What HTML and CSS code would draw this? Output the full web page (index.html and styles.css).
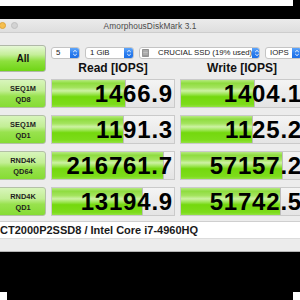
FILE: index.html
```html
<!DOCTYPE html>
<html>
<head>
<meta charset="utf-8">
<link rel="stylesheet" href="styles.css">
</head>
<body>
<div class="screen">
  <div class="strip-top"><div class="wht"></div><div class="blk"></div></div>
  <div class="band-top"></div>
  <div class="window">
    <div class="titlebar">
      <div class="lights"><span class="light yellow"></span><span class="light gray"></span></div>
      <div class="title">AmorphousDiskMark 3.1</div>
      <div></div>
    </div>
    <div class="content">
      <div class="grid">
        <div class="btn-all">All</div>
        <div class="topright">
          <div class="selects">
            <div class="sel w5"><span class="txt">5</span><span class="step"><svg width="10" height="10" viewBox="0 0 10 10"><path d="M3.2 4 L5 2.4 L6.8 4 M3.2 6 L5 7.6 L6.8 6" fill="none" stroke="#fff" stroke-width="0.9"/></svg></span></div>
            <div class="sel wgib"><span class="txt">1 GiB</span><span class="step"><svg width="10" height="10" viewBox="0 0 10 10"><path d="M3.2 4 L5 2.4 L6.8 4 M3.2 6 L5 7.6 L6.8 6" fill="none" stroke="#fff" stroke-width="0.9"/></svg></span></div>
            <div class="sel wdrive"><span class="disk"><svg width="7" height="8" viewBox="0 0 7 8"><rect x="0.3" y="0.3" width="6.4" height="7.4" rx="0.8" fill="#9a9a9a" stroke="#6e6e6e" stroke-width="0.6"/><path d="M1.2 2 H5.8 M1.2 3.5 H5.8 M1.2 5 H5.8" stroke="#d8d8d8" stroke-width="0.6"/></svg></span><span class="txt">CRUCIAL SSD (19% used)</span><span class="step"><svg width="10" height="10" viewBox="0 0 10 10"><path d="M3.2 4 L5 2.4 L6.8 4 M3.2 6 L5 7.6 L6.8 6" fill="none" stroke="#fff" stroke-width="0.9"/></svg></span></div>
            <div class="sel wiops"><span class="txt">IOPS</span><span class="step"><svg width="10" height="10" viewBox="0 0 10 10"><path d="M3.2 4 L5 2.4 L6.8 4 M3.2 6 L5 7.6 L6.8 6" fill="none" stroke="#fff" stroke-width="0.9"/></svg></span></div>
          </div>
          <div class="heads">
            <div class="head">Read [IOPS]</div>
            <div class="head">Write [IOPS]</div>
          </div>
        </div>

        <div class="label">SEQ1M<br>QD8</div>
        <div class="cell"><div class="bar" style="width:74px"></div><span class="val">1466.9</span></div>
        <div class="cell"><div class="bar" style="width:74px"></div><span class="val">1404.1</span></div>

        <div class="label">SEQ1M<br>QD1</div>
        <div class="cell"><div class="bar" style="width:72px"></div><span class="val">1191.3</span></div>
        <div class="cell"><div class="bar" style="width:72px"></div><span class="val">1125.2</span></div>

        <div class="label">RND4K<br>QD64</div>
        <div class="cell"><div class="bar" style="width:112px"></div><span class="val">216761.7</span></div>
        <div class="cell"><div class="bar" style="width:102px"></div><span class="val">57157.2</span></div>

        <div class="label">RND4K<br>QD1</div>
        <div class="cell"><div class="bar" style="width:91px"></div><span class="val">13194.9</span></div>
        <div class="cell"><div class="bar" style="width:100px"></div><span class="val">51742.5</span></div>
      </div>
      <div class="footer">CT2000P2SSD8 / Intel Core i7-4960HQ</div>
    </div>
  </div>
  <div class="band-bottom"></div>
  <div class="strip-bottom"><div class="wht"></div><div class="blk"></div><div class="wht"></div></div>
</div>
</body>
</html>
```
FILE: styles.css
```css
html, body {
  margin: 0;
  padding: 0;
  background: #fff;
  overflow: hidden;
}
.screen {
  width: 300px;
  height: 300px;
  overflow: hidden;
  display: flex;
  flex-direction: column;
  font-family: "Liberation Sans", Arial, sans-serif;
}
.strip-top {
  height: 6px;
  display: flex;
  flex: none;
}
.strip-top .wht { width: 293px; background: #fff; }
.strip-top .blk { flex: 1; background: #000; }
.band-top {
  height: 13px;
  background: #000;
  flex: none;
}
.window {
  height: 233px;
  flex: none;
  background: #ececec;
  box-sizing: border-box;
  border-bottom: 1px solid #b4b4b4;
  overflow: hidden;
  display: flex;
  flex-direction: column;
}
.titlebar {
  height: 14px;
  flex: none;
  box-sizing: border-box;
  background: linear-gradient(#ebebeb, #dedede);
  border-bottom: 1px solid #cdcdcd;
  display: grid;
  grid-template-columns: 1fr auto 1fr;
  align-items: center;
}
.lights {
  display: flex;
  align-items: center;
  margin-left: -1px;
  gap: 5px;
}
.light {
  width: 7px;
  height: 7px;
  border-radius: 50%;
  box-sizing: border-box;
}
.light.yellow { background: #f6bf4f; border: 0.5px solid #dca43c; }
.light.gray { background: #d3d3d3; border: 0.5px solid #c0c0c0; }
.title {
  font-size: 8.3px;
  color: #4a4a4a;
  letter-spacing: 0.1px;
}
.content {
  padding-top: 12px;
  display: flex;
  flex-direction: column;
}
.grid {
  display: grid;
  grid-template-columns: 49px 124px 124px;
  grid-template-rows: 27px 29px 29px 29px 29px;
  column-gap: 5px;
  row-gap: 7px;
  margin-left: -3px;
  row-gap: 7px;
}
.grid > .label:nth-of-type(1) { }
.btn-all {
  box-sizing: border-box;
  border: 1px solid #b0b8a8;
  border-radius: 3px;
  background: linear-gradient(#e6f8d6 0%, #c4ee98 35%, #8ee03e 60%, #6fd515 100%);
  font-weight: bold;
  font-size: 10px;
  color: #111;
  display: flex;
  align-items: center;
  justify-content: center;
  padding-left: 3px;
}
.topright {
  grid-column: 2 / 4;
  display: flex;
  flex-direction: column;
}
.selects {
  display: flex;
  gap: 5px;
  margin-top: 2px;
  height: 12px;
}
.sel {
  box-sizing: border-box;
  height: 12px;
  display: flex;
  align-items: center;
  background: #fff;
  border: 1px solid #c4c4c4;
  border-radius: 3px;
  font-size: 7.8px;
  color: #222;
  overflow: hidden;
}
.sel .txt {
  flex: 1;
  padding-left: 4px;
  white-space: nowrap;
  line-height: 10px;
}
.sel .disk {
  display: flex;
  padding-left: 2px;
}
.sel .disk + .txt { padding-left: 9px; }
.sel .step {
  width: 10px;
  height: 12px;
  margin: -1px -1px -1px 0;
  border-radius: 0 3px 3px 0;
  background: linear-gradient(#6aaefb, #2a7cef 55%, #1a6de4);
  display: flex;
  align-items: center;
  justify-content: center;
}
.w5 { width: 29px; }
.wgib { width: 49px; }
.wdrive { width: 121px; }
.wiops { width: 37px; flex: none; }
.heads {
  display: grid;
  grid-template-columns: 124px 124px;
  column-gap: 5px;
  margin-top: 3px;
}
.head {
  text-align: center;
  font-weight: bold;
  font-size: 12px;
  line-height: 13px;
  color: #111;
}
.label {
  box-sizing: border-box;
  border: 1px solid #b3c0a6;
  border-radius: 3px;
  background: linear-gradient(#d8f5bc 0%, #c2ee94 40%, #98e24e 60%, #86dc34 100%);
  font-weight: bold;
  font-size: 7.4px;
  line-height: 11px;
  color: #1e1e1e;
  text-align: center;
  display: flex;
  align-items: center;
  justify-content: center;
  padding-left: 3px;
}
.cell {
  box-sizing: border-box;
  border: 1px solid #cacaca;
  background: linear-gradient(#f4f4f4, #e4e4e4);
  display: flex;
  justify-content: flex-end;
  align-items: center;
  overflow: hidden;
}
.bar {
  align-self: stretch;
  margin-right: auto;
  box-sizing: border-box;
  border-right: 1px solid #bcbcbc;
  background: linear-gradient(#b6ea80 0%, #8fdc40 12%, #a4e45e 28%, #cdf2a4 40%, #9ee656 52%, #74d80e 62%, #7ddc1a 90%, #94e244 100%);
}
.val {
  position: relative;
  font-weight: bold;
  font-size: 24px;
  letter-spacing: 0.8px;
  line-height: 27px;
  color: #000;
  padding-right: 1px;
  margin-left: -200px;
  white-space: nowrap;
}
.footer {
  margin-top: 5px;
  height: 18px;
  box-sizing: border-box;
  background: #fff;
  border-top: 1px solid #cfcfcf;
  border-bottom: 1px solid #dcdcdc;
  font-weight: bold;
  font-size: 11px;
  line-height: 16px;
  color: #1a1a1a;
  white-space: nowrap;
  padding-left: 0;
}
.band-bottom {
  height: 40px;
  background: #000;
  flex: none;
}
.strip-bottom {
  height: 8px;
  display: flex;
  flex: none;
}
.strip-bottom .wht { width: 7px; background: #fff; }
.strip-bottom .blk { flex: 1; background: #000; }
```
